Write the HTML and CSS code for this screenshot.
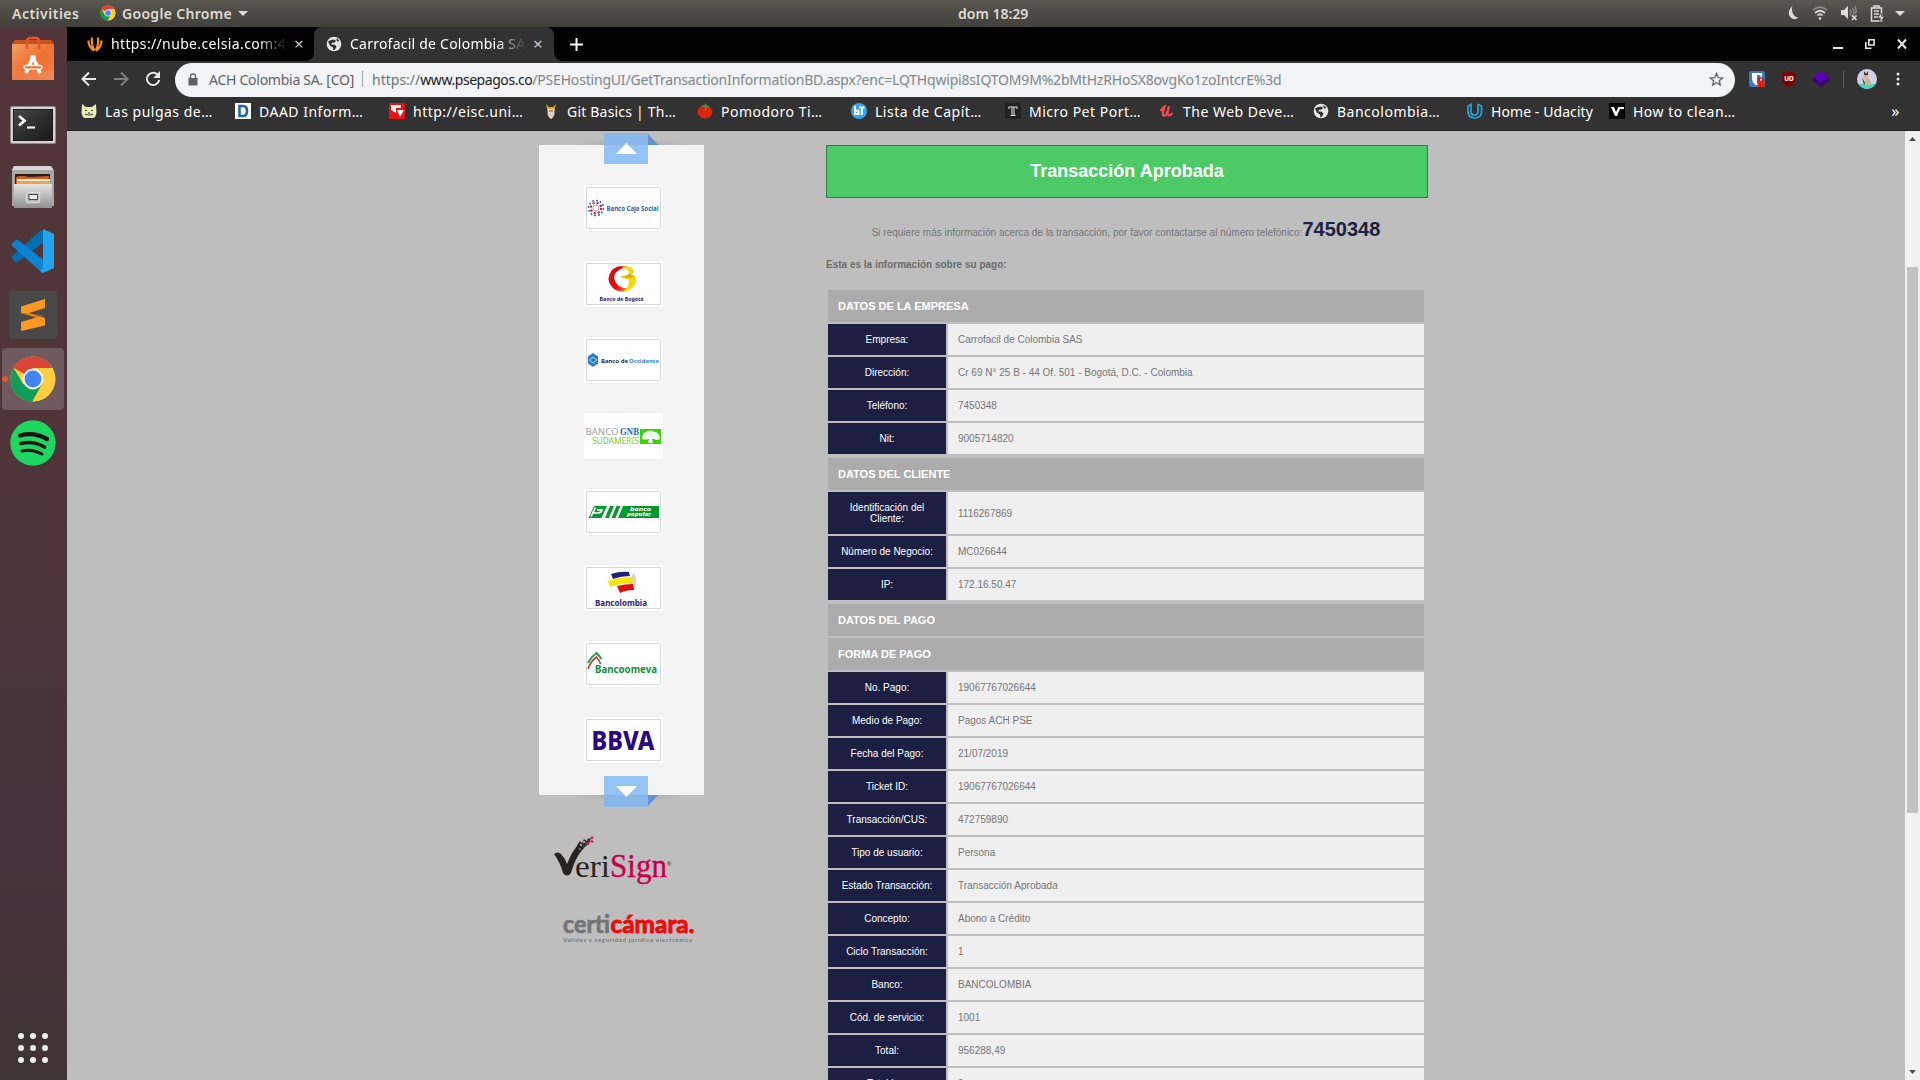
FILE: index.html
```html
<!DOCTYPE html>
<html lang="es">
<head>
<meta charset="utf-8">
<title>Carrofacil de Colombia SAS</title>
<link rel="stylesheet" href="styles.css">
</head>
<body>
<svg class="defs" width="0" height="0">
  <defs>
    <linearGradient id="bag" x1="0" y1="0" x2="1" y2="1"><stop offset="0" stop-color="#f0a060"/><stop offset=".5" stop-color="#ef7134"/><stop offset="1" stop-color="#f08048"/></linearGradient>
    <linearGradient id="steel" x1="0" y1="0" x2="0" y2="1"><stop offset="0" stop-color="#e4e4e4"/><stop offset="1" stop-color="#8f8f8f"/></linearGradient>
    <linearGradient id="screen" x1="0" y1="0" x2="1" y2="1"><stop offset="0" stop-color="#4a4a4a"/><stop offset=".55" stop-color="#2b2b2b"/><stop offset="1" stop-color="#1b1b1b"/></linearGradient>
    <linearGradient id="redc" x1="0" y1="0" x2="1" y2="1"><stop offset="0" stop-color="#c81018"/><stop offset=".6" stop-color="#f00808"/><stop offset="1" stop-color="#ffb090"/></linearGradient>
    <radialGradient id="cap" cx=".5" cy="1" r="1" gradientTransform="translate(.25 0) scale(.5 1)"><stop offset="0" stop-color="#909090"/><stop offset="1" stop-color="#bebebe" stop-opacity="0"/></radialGradient>
    <symbol id="chrome" viewBox="0 0 48 48">
      <circle cx="24" cy="24" r="22.5" fill="#ffcd40"/>
      <path d="M24 24L4.500 12.800A22.500 22.500 0 0 1 43.500 13H24z" fill="#db4437"/>
      <path d="M4.500 12.800A22.500 22.500 0 0 0 23.500 46.500L33 29.500 24 24 14.500 29.500z" fill="#0f9d58"/>
      <path d="M24 13.500h19.500a22.500 22.500 0 0 1-20 33L33.200 29.200z" fill="#ffcd40"/>
      <circle cx="24" cy="24" r="10.400" fill="#f4f4f4"/><circle cx="24" cy="24" r="8.400" fill="#4285f4"/>
    </symbol>
    <symbol id="globe" viewBox="0 0 16 16">
      <circle cx="8" cy="8" r="7.300" fill="#e6e6e6"/>
      <path d="M2 5.500L5 4l3-.5 2 1.300-1.200 1.700-2.500.3L5 8.200l3.800.6 1.700 2L9 13.600 7.300 14.500 7 11.500 4 9.700z" fill="#333"/><path d="M10.500 2l2.500 2.300-.8 1.700-1.500-1.200z" fill="#333"/>
    </symbol>
  </defs>
</svg>

<header class="topbar">
  <span class="activities">Activities</span>
  <span class="appmenu"><svg width="16" height="16"><use href="#chrome"/></svg><span>Google Chrome</span><i class="caret"></i></span>
  <span class="clock">dom 18:29</span>
  <span class="status">
    <svg width="12" height="18" viewBox="0 0 14 18"><path d="M5 1C1.500 4-.5 9 2.500 13.500 5 17 10 17 12 14 7 14 3.500 8 5 1z" fill="#dfdbd2"/></svg>
    <svg width="16" height="16" viewBox="0 0 16 16" fill="none" stroke="#dfdbd2" stroke-width="1.700"><path d="M1 5.200Q8-1 15 5.200" stroke="#8d8a83"/><path d="M3 8Q8 3.500 13 8M5.300 10.500Q8 8 10.700 10.500"/><circle cx="8" cy="13.500" r="1.300" fill="#dfdbd2" stroke="none"/></svg>
    <svg width="18" height="16" viewBox="0 0 18 16"><path d="M1 5h3l4-4v13l-4-4H1z" fill="#dfdbd2"/><path d="M10 4.500q2 3 0 6M12.500 2.500q3 5 0 9M15 1q2 5 .5 8" fill="none" stroke="#8d8a83" stroke-width="1.400"/><path d="M12 10.500l4.500 4.500m0-4.500L12 15" stroke="#dfdbd2" stroke-width="1.600"/></svg>
    <svg width="15" height="17" viewBox="0 0 15 17"><path d="M4 3V1h5v2M1.500 3h10v13h-10zM4 6h5M4 9h5M4 12h4" fill="none" stroke="#dfdbd2" stroke-width="1.500"/><path d="M11.500 8l-4 5h3l-1 4 5-5.500h-3z" fill="#dfdbd2" stroke="#4c4a45" stroke-width=".6"/></svg>
    <i class="caret"></i>
  </span>
</header>

<div class="desktop">
  <nav class="dock">
    <div class="dock-item"><svg width="44" height="46" viewBox="0 0 44 46"><path d="M1 8l3-4h36l3 4z" fill="#c9501f"/><path d="M1 8h42v36H1z" fill="url(#bag)"/><path d="M1 35h42v9H1z" fill="#fff" opacity=".07"/><path d="M16 13V6q0-4 3-4h6q3 0 3 4v7" fill="none" stroke="#e2582a" stroke-width="2.600"/><path d="M22 21l-7 16M22 21l7 16M19.500 21h5" fill="none" stroke="#fff" stroke-width="3.600"/><rect x="13" y="29.500" width="18" height="3.600" rx="1.800" fill="#ef7134" stroke="#fff" stroke-width="1.300"/></svg></div>
    <div class="dock-item terminal"><svg width="46" height="38" viewBox="0 0 46 38"><rect x=".5" y=".5" width="45" height="37" rx="1.500" fill="#d2d2d2" stroke="#8f8f8f"/><rect x="3.500" y="3.500" width="39" height="31" fill="url(#screen)" stroke="#1d1d1d"/><path d="M9 10l5.500 4.700L9 19.500" fill="none" stroke="#f0f0f0" stroke-width="2.800"/><path d="M17 21.500h8" stroke="#f0f0f0" stroke-width="2.200"/></svg></div>
    <div class="dock-item"><svg width="44" height="44" viewBox="0 0 44 44"><path d="M3 1h37l3 4v36H1V5z" fill="#a8a8a8"/><path d="M3 1h37l2 4H1z" fill="#d6d6d6"/><path d="M4 9h35v12H4z" fill="#2a2220"/><path d="M5 12q6-2 13 0l20-1v8H5z" fill="#dd5a1c"/><path d="M6 14h33v2H6z" fill="#fff3dc"/><path d="M6 16h33v3H6z" fill="#eda352"/><path d="M3 19h38v24H3z" fill="url(#steel)"/><rect x="15.500" y="27.500" width="13" height="10" rx="1.500" fill="#b8b8b8" stroke="#d8d8d8" stroke-width="1.500"/><rect x="18" y="29.500" width="8.500" height="5" fill="#e8e8e8" stroke="#4a4a4a"/></svg></div>
    <div class="dock-item"><svg width="44" height="44" viewBox="0 0 44 44"><path d="M32 1v12.500L7 33q-1 .8-2 0l-4-3.500q-1-1.200 0-2.200L29 2z" fill="#0070b3"/><path d="M32 43V30.500L7 11q-1-.8-2 0l-4 3.500q-1 1.200 0 2.200L29 42z" fill="#0c84cf"/><path d="M32 0l11 5v34l-11 5-3-2 3-3z" fill="#24a3ef"/></svg></div>
    <div class="dock-item"><svg width="48" height="48" viewBox="0 0 48 48"><rect width="48" height="48" rx="3" fill="#484848"/><path d="M12 15.500L36 8v9l-16 5 16 5v7.500L12 40v-9l15-4.500-15-4.500z" fill="#ff9822"/><path d="M12 22l15 4.500 9-2L20 22z" fill="#c9690f" opacity=".55"/></svg></div>
    <div class="dock-item active"><svg width="48" height="48"><use href="#chrome"/></svg></div>
    <div class="dock-item"><svg width="46" height="46" viewBox="0 0 46 46"><circle cx="23" cy="23" r="22.700" fill="#1ed760"/><g fill="none" stroke="#191414" stroke-linecap="round"><path d="M10 15.500q14-4 27 3.500" stroke-width="4.400"/><path d="M11 23.500q12-3 23.500 3.500" stroke-width="3.600"/><path d="M12 31q10-2.500 20 3" stroke-width="3"/></g></svg></div>
    <div class="dock-apps"><i></i><i></i><i></i><i></i><i></i><i></i><i></i><i></i><i></i></div>
  </nav>

  <main class="browser">
    <div class="tabs">
      <div class="tab">
        <svg width="16" height="16" viewBox="0 0 16 16" fill="none" stroke="#f58a1f" stroke-width="2.200"><path d="M7 15Q1 10 1.500 4.500M7.300 14.500Q4 8 5 1.500M9 15q6-5 5.500-10.500M8.700 14.500Q12 8 11 1.500"/></svg>
        <span class="tab-title t1">https://nube.celsia.com:4</span><span class="x">×</span>
      </div>
      <div class="tab current">
        <svg width="16" height="16"><use href="#globe"/></svg>
        <span class="tab-title t2">Carrofacil de Colombia SA</span><span class="x">×</span>
      </div>
      <svg class="plus" width="13" height="13" viewBox="0 0 13 13"><path d="M6.500 0v13M0 6.500h13" stroke="#fff" stroke-width="2"/></svg>
      <div class="win">
        <svg width="10" height="12" viewBox="0 0 10 12"><path d="M0 10h10" stroke="#e8e8e8" stroke-width="2"/></svg>
        <svg width="10" height="12" viewBox="0 0 10 12"><path d="M3.800 1.800h5.300V7H3.800zM.8 4v6.200h5.700" fill="none" stroke="#e8e8e8" stroke-width="1.600"/></svg>
        <svg width="10" height="12" viewBox="0 0 10 12"><path d="M1 1.500l8 9M9 1.500l-8 9" stroke="#e8e8e8" stroke-width="2"/></svg>
      </div>
    </div>

    <div class="toolbar">
      <svg width="16" height="16" viewBox="0 0 16 16" fill="none" stroke="#e8e8e8" stroke-width="2"><path d="M15 8H2M8 1.500L1.500 8 8 14.500"/></svg>
      <svg width="16" height="16" viewBox="0 0 16 16" fill="none" stroke="#7e7e7e" stroke-width="2"><path d="M1 8h13M8 1.500L14.500 8 8 14.500"/></svg>
      <svg width="16" height="16" viewBox="0 0 16 16"><path d="M13.200 4.300A6.200 6.200 0 1 0 14.200 9" fill="none" stroke="#e8e8e8" stroke-width="2"/><path d="M15 0v7H8.300z" fill="#e8e8e8"/></svg>
      <div class="omnibox">
        <svg width="10" height="13" viewBox="0 0 10 13"><path d="M.5 5h9v7.500h-9z" fill="#5f6368"/><path d="M2.500 5V3q0-2 2.500-2t2.500 2v2" fill="none" stroke="#5f6368" stroke-width="1.400"/></svg>
        <span class="org">ACH Colombia SA. [CO]</span><i class="bar"></i>
        <span class="url"><span class="scheme">https://</span><span class="host">www.psepagos.co</span><span class="path">/PSEHostingUI/GetTransactionInformationBD.aspx?enc=LQTHqwipi8sIQTOM9M%2bMtHzRHoSX8ovgKo1zoIntcrE%3d</span></span>
        <svg class="star" width="15" height="15" viewBox="0 0 16 16"><path d="M8 1.500l1.900 4.400 4.700.4-3.600 3.100 1.100 4.600L8 11.500 3.900 14 5 9.400 1.400 6.300l4.700-.4z" fill="none" stroke="#5f6368" stroke-width="1.400"/></svg>
      </div>
      <div class="exts">
        <svg width="16" height="16" viewBox="0 0 16 16"><rect width="16" height="16" rx="2" fill="#3c78c3"/><path d="M3 2h10v6q0 4-5 6.500Q3 12 3 8z" fill="#fff"/><path d="M8 4h3.500v4q0 2-3.500 4.500z" fill="#3c78c3"/><path d="M9.800 10V8.800q0-2 2.200-2t2.200 2V10" fill="none" stroke="#c11" stroke-width="1.300"/><path d="M8.500 9.500H15.500V16h-7z" fill="#e0200f"/></svg>
        <svg width="16" height="16" viewBox="0 0 16 16"><path d="M8 0q3 2 7 2v6q0 5-7 8-7-3-7-8V2q4 0 7-2z" fill="#800000"/><text x="8" y="10" text-anchor="middle" font-family="Noto Sans, sans-serif" font-size="6.500" font-weight="700" fill="#fff">UD</text></svg>
        <svg width="16" height="16" viewBox="0 0 16 16"><path d="M8 0l8 6-8 6-8-6z" fill="#5b00b5"/><path d="M0 6l8 6 8-6v4l-8 6-8-6z" fill="#36086e"/></svg>
        <i class="vsep"></i>
        <svg width="20" height="20" viewBox="0 0 20 20"><circle cx="10" cy="10" r="10" fill="#cfcfe8"/><path d="M1.500 15h17A10 10 0 0 1 1.500 15z" fill="#3fd6c6"/><path d="M7 3l2 2 2-2 .5 4-1 2q3 1.500 3.500 7H8.500L8 10 6.500 7z" fill="#c9b791"/><path d="M7 2l2 3 2-3v4H7zM5 8l3 6-1 2z" fill="#3b3130"/></svg>
        <svg class="menu" width="4" height="16" viewBox="0 0 4 16" fill="#e8e8e8"><circle cx="2" cy="3" r="1.500"/><circle cx="2" cy="8" r="1.500"/><circle cx="2" cy="13" r="1.500"/></svg>
      </div>
    </div>

    <div class="bookmarks">
      <span class="bm"><svg width="16" height="16" viewBox="0 0 16 16"><path d="M1 1l4 3h6l4-3 .5 9q-1 5-3.500 5H4q-2.500 0-3.500-5z" fill="#e9eeb0"/><path d="M4 7.500h2M10 7.500h2M4 11q4 2 8 0M8 9v2" stroke="#444" stroke-width="1.200" fill="none"/></svg>Las pulgas de…</span>
      <span class="bm"><svg width="16" height="16" viewBox="0 0 16 16"><path d="M0 0h16v16H0z" fill="#fff"/><path d="M4.500 3H8q4 0 4 5t-4 5H4.500z" fill="none" stroke="#1f67a8" stroke-width="2.600"/></svg>DAAD Inform…</span>
      <span class="bm"><svg width="16" height="16" viewBox="0 0 16 16"><path d="M0 0h16v16H0z" fill="#e11"/><path d="M2 2h10v3H7v5L2 7z" fill="#fff"/><path d="M8 7h7l-4 7z" fill="#fff"/></svg>http://eisc.uni…</span>
      <span class="bm tight"><svg width="16" height="16" viewBox="0 0 16 16"><path d="M3 1l3 3h4l3-3-1.500 6h-7z" fill="#e0a52a"/><path d="M4.500 6h7v5q-1 4-3.500 5-2.500-1-3.500-5z" fill="#d8d2c8"/><path d="M6 7h4v2H6z" fill="#c98f6a"/></svg>Git Basics | Th…</span>
      <span class="bm"><svg width="16" height="16" viewBox="0 0 16 16"><ellipse cx="8" cy="9" rx="7.500" ry="6.500" fill="#e02412"/><path d="M8 5L4 2l3 .5L9 0l.5 2.500L13 3 9.500 5 8 8z" fill="#4b9b2c"/></svg>Pomodoro Ti…</span>
      <span class="bm"><svg width="16" height="16" viewBox="0 0 16 16"><circle cx="8" cy="8" r="8" fill="#35a7ea"/><path d="M4 3v9M4 8.500q3-2 3.500 0V11H4M8 4.500h5.500M10.800 4.500V12" stroke="#fff" stroke-width="2" fill="none"/></svg>Lista de Capít…</span>
      <span class="bm"><svg width="16" height="16" viewBox="0 0 16 16"><path d="M0 0h16v16H0z" fill="#222"/><path d="M4 6V4h8v2M7 4v8M9 4v8M5.500 12.500h5" stroke="#d8d8d8" stroke-width="1.100" fill="none"/></svg>Micro Pet Port…</span>
      <span class="bm"><svg width="16" height="16" viewBox="0 0 16 16"><path d="M1.500 8q3-4 4-4.500Q3.500 9 4 12q1 2 3.500-1L10 3.500Q8 9 9 12q1.500 1.500 4.500-2" fill="none" stroke="#ec4b51" stroke-width="2.200"/></svg>The Web Deve…</span>
      <span class="bm"><svg width="16" height="16"><use href="#globe"/></svg>Bancolombia…</span>
      <span class="bm udacity"><svg width="16" height="16" viewBox="0 0 16 16"><path d="M1 3l3-1.500V9q0 3 3 3.500M4 1.500V8q0 4 3.500 4T11 8V1.500L14.500 3v6q0 5-6 6Q1 15 1 9V3" fill="none" stroke="#1fa6e6" stroke-width="1.700"/></svg>Home - Udacity</span>
      <span class="bm"><svg width="16" height="16" viewBox="0 0 16 16"><path d="M0 0h16v16H0z" fill="#000"/><path d="M2 4h3l2 5 2.500-5H15v2h-4l-3 7H6z" fill="#fff"/></svg>How to clean…</span>
      <span class="more">»</span>
    </div>

    <div class="view">
      <div class="page">
        <aside class="side">
          <div class="carousel">
            <svg class="cap top" width="124" height="8"><path d="M0 0h124v8H0z" fill="url(#cap)"/></svg>
            <svg class="arrow up" width="54" height="31" viewBox="0 0 54 31"><path d="M44 1l10 11H44z" fill="#5e93cf"/><path d="M0 0h44v31H0z" fill="#93c3f4"/><path d="M0 0h44v12H0z" fill="#89b8e8"/><path d="M12 21l10.500-11L33 21z" fill="#fff"/></svg>
            <svg class="cap bottom" width="124" height="8"><path d="M0 0h124v8H0z" fill="url(#cap)"/></svg>
            <svg class="arrow down" width="54" height="31" viewBox="0 0 54 31"><path d="M44 30l10-11H44z" fill="#5e93cf"/><path d="M0 0h44v31H0z" fill="#93c3f4"/><path d="M0 19h44v12H0z" fill="#89b8e8"/><path d="M12 10l10.500 11L33 10z" fill="#fff"/></svg>

            <svg class="bank" viewBox="0 0 79 46"><g fill="none" stroke-width="2.200"><circle cx="12" cy="23" r="7.500" stroke="#2a6cb4" stroke-width="1.500" stroke-dasharray="1.900 2"/><circle cx="12" cy="23" r="5.200" stroke="#d02038" stroke-dasharray="2.100 1.980"/><circle cx="12" cy="23" r="3" stroke="#b8a0c8" stroke-width="1"/></g><text x="22.500" y="25.700" font-size="6.200" font-weight="700" fill="#1f5fae" textLength="52" lengthAdjust="spacingAndGlyphs">Banco Caja Social</text></svg>
            <svg class="bank" viewBox="0 0 79 46"><path d="M47 7Q36 2 28 9q-7 9 0 17 6 6 14 4l3-3q-9 1-13-5-5-8 3-13 5-3 12-2z" fill="url(#redc)"/><path d="M37 6q7-2 12 2 2 4-2 6l4 1q3 6-2 11-4 5-10 4 7-4 6-11l-9-3 9-2q2-5-8-8z" fill="#f7d808"/><path d="M34 15q7 1 11-2l6 2-6 2z" fill="#dba808"/><text x="15.500" y="40" font-size="5.800" font-weight="700" fill="#221a78" textLength="44" lengthAdjust="spacingAndGlyphs">Banco de Bogotá</text></svg>
            <svg class="bank" viewBox="0 0 79 46"><path d="M9 16l5 3.500v7L9 30l-5-3.500v-7z" fill="#2f7ccb"/><path d="M9 20l3.500 3L9 26l-3.500-3z" fill="none" stroke="#b8dcf4" stroke-width="1"/><text x="17" y="25.500" font-size="6" font-weight="700" fill="#1c2c68" textLength="27" lengthAdjust="spacingAndGlyphs">Banco de</text><text x="45" y="25.500" font-size="6" font-weight="700" fill="#2b86d4" textLength="30" lengthAdjust="spacingAndGlyphs">Occidente</text></svg>
            <svg class="bank plain" viewBox="0 0 79 46"><text x="1.500" y="22" font-size="8.800" fill="#a0a0a0" textLength="33" lengthAdjust="spacingAndGlyphs">BANCO</text><text class="serif" x="36" y="22" font-size="9.500" font-weight="700" fill="#2264a8" textLength="19" lengthAdjust="spacingAndGlyphs">GNB</text><text x="8" y="30.700" font-size="8.800" fill="#6cd42c" textLength="47" lengthAdjust="spacingAndGlyphs">SUDAMERIS</text><path d="M56 16h21v15H56z" fill="#38d400"/><path d="M58 26q0-6 4-7 4-3 9 0 5 1 5 7-3 2-6 0h-2l1 4h-5l1-4q-4 1-7 0z" fill="#f2fff0"/></svg>
            <svg class="bank" viewBox="0 0 79 46"><path d="M10 17h13l-5.500 12H4.500z" fill="#089830"/><path d="M11.500 18.500l-4.500 9M8 24h6q3 0 4-3h-5" fill="none" stroke="#fff" stroke-width="1.700"/><path d="M26 17h4l-5 12h-4zM32.500 17h4l-5 12h-4zM39 17h36v12H34z" fill="#089830"/><text x="46" y="21.800" font-size="5" font-style="italic" font-weight="700" fill="#fff" textLength="21" lengthAdjust="spacingAndGlyphs">banco</text><text x="43" y="27.300" font-size="5" font-style="italic" font-weight="700" fill="#fff" textLength="24" lengthAdjust="spacingAndGlyphs">popular</text></svg>
            <svg class="bank" viewBox="0 0 79 46"><path d="M49 8q6 5 1 16l-5-2z" fill="#d5d5d5"/><path d="M27 9q9-3 18-2l1 4q-9 0-17 3z" fill="#24207c"/><path d="M24 16q12-4 25-4l-1 6q-12 0-22 4z" fill="#f8e400"/><path d="M33 21q8-2 16-2l1 6q-8 0-14 3z" fill="#e01010"/><text x="11" y="40.500" font-size="9.500" font-weight="700" fill="#2a2084" textLength="52" lengthAdjust="spacingAndGlyphs">Bancolombia</text></svg>
            <svg class="bank" viewBox="0 0 79 46"><path d="M4 22q3-6 8.500-10 3 3 5 6" fill="none" stroke="#1a9850" stroke-width="1.800"/><path d="M4 28q3-8 8.500-12 3 3 4 7" fill="none" stroke="#c43a2c" stroke-width="1.600"/><text x="11" y="31.700" font-size="10.500" font-weight="700" fill="#109040" textLength="62" lengthAdjust="spacingAndGlyphs">Bancoomeva</text></svg>
            <svg class="bank" viewBox="0 0 79 46"><text x="7.500" y="33.300" font-size="26" font-weight="800" fill="#2a0a80" textLength="63" lengthAdjust="spacingAndGlyphs">BBVA</text></svg>
          </div>
          <svg class="verisign" width="120" height="52" viewBox="0 0 120 52"><path d="M0 18q4-3 7 0 4 4 6 10Q19 13 25 8l4 5q-8 9-12 24-4 5-8 0Q6 26 0 18z" fill="#262524"/><path d="M23 9l3-4 2 2 2-4 3 2 1-3 3 1-2 5-4 3-3 3z" fill="#262524" opacity=".9"/><g fill="#bebebe"><circle cx="27" cy="9" r="1"/><circle cx="30" cy="6" r="1"/><circle cx="33" cy="7" r="1"/><circle cx="26" cy="13" r=".8"/></g><g fill="#c8104c"><circle cx="38" cy="1.800" r="1.400"/><circle cx="38" cy="5.500" r="1.300"/><circle cx="33.500" cy="7.500" r="1.400"/></g><text class="serif" x="21" y="41" font-size="32" fill="#262524" textLength="35" lengthAdjust="spacingAndGlyphs">eri</text><text class="serif" x="56" y="41" font-size="34" fill="#c4004c" stroke="#c4004c" stroke-width=".4" textLength="57" lengthAdjust="spacingAndGlyphs">Sign</text><text x="112.500" y="30" font-size="6" fill="#444">®</text></svg>
          <svg class="certi" width="135" height="32" viewBox="0 0 135 32"><text class="lato" x="0" y="20.500" font-size="25" font-weight="700" fill="#747476" stroke="#747476" stroke-width=".7" textLength="47" lengthAdjust="spacingAndGlyphs">certi</text><text class="lato" x="47.500" y="20.500" font-size="25" font-weight="700" fill="#ee0a0a" stroke="#ee0a0a" stroke-width=".9" textLength="84" lengthAdjust="spacingAndGlyphs">cámara.</text><text class="lato" x="0" y="29.500" font-size="6" font-weight="700" fill="#77777a" textLength="129">Validez y seguridad jurídica electrónica</text></svg>
        </aside>

        <section class="detail">
          <h1 class="result">Transacción Aprobada</h1>
          <p class="contact">Si requiere más información acerca de la transacción, por favor contactarse al número telefónico:<b>7450348</b></p>
          <p class="intro">Esta es la información sobre su pago:</p>
          <table>
            <colgroup><col class="label"><col></colgroup>
            <tr><th colspan="2">DATOS DE LA EMPRESA</th></tr>
            <tr><td class="k">Empresa:</td><td>Carrofacil de Colombia SAS</td></tr>
            <tr><td class="k">Dirección:</td><td>Cr 69 N° 25 B - 44 Of. 501 - Bogotá, D.C. - Colombia</td></tr>
            <tr><td class="k">Teléfono:</td><td>7450348</td></tr>
            <tr><td class="k">Nit:</td><td>9005714820</td></tr>
          </table>
          <table>
            <colgroup><col class="label"><col></colgroup>
            <tr><th colspan="2">DATOS DEL CLIENTE</th></tr>
            <tr><td class="k">Identificación del Cliente:</td><td>1116267869</td></tr>
            <tr><td class="k">Número de Negocio:</td><td>MC026644</td></tr>
            <tr><td class="k">IP:</td><td>172.16.50.47</td></tr>
          </table>
          <table>
            <colgroup><col class="label"><col></colgroup>
            <tr><th colspan="2">DATOS DEL PAGO</th></tr>
            <tr><th colspan="2">FORMA DE PAGO</th></tr>
            <tr><td class="k">No. Pago:</td><td>19067767026644</td></tr>
            <tr><td class="k">Medio de Pago:</td><td>Pagos ACH PSE</td></tr>
            <tr><td class="k">Fecha del Pago:</td><td>21/07/2019</td></tr>
            <tr><td class="k">Ticket ID:</td><td>19067767026644</td></tr>
            <tr><td class="k">Transacción/CUS:</td><td>472759890</td></tr>
            <tr><td class="k">Tipo de usuario:</td><td>Persona</td></tr>
            <tr><td class="k">Estado Transacción:</td><td>Transacción Aprobada</td></tr>
            <tr><td class="k">Concepto:</td><td>Abono a Crédito</td></tr>
            <tr><td class="k">Ciclo Transacción:</td><td>1</td></tr>
            <tr><td class="k">Banco:</td><td>BANCOLOMBIA</td></tr>
            <tr><td class="k">Cód. de servicio:</td><td>1001</td></tr>
            <tr><td class="k">Total:</td><td>956288,49</td></tr>
            <tr><td class="k">Total Iva:</td><td>0</td></tr>
          </table>
        </section>
      </div>
      <div class="scrollbar">
        <svg width="7" height="4"><path d="M0 4L3.500 0 7 4z" fill="#4d4d4d"/></svg>
        <i class="thumb"></i>
        <svg width="7" height="4"><path d="M0 0l3.500 4L7 0z" fill="#4d4d4d"/></svg>
      </div>
    </div>
  </main>
</div>
</body>
</html>
```
FILE: styles.css
```css
* { box-sizing: border-box; }
body { margin: 0; width: 1920px; height: 1080px; overflow: hidden; display: flex; flex-direction: column; font-family: "Noto Sans", sans-serif; background: #bebebe; }
svg { flex: none; display: block; overflow: visible; }
.defs { position: absolute; }

.topbar { height: 27px; flex: none; display: grid; grid-template-columns: 100px 1fr auto 1fr; align-items: center; background: linear-gradient(#5a574e, #403f3a); color: #dfdbd2; font-size: 14px; font-weight: 600; padding: 0 15px 1px 0; }
.activities { padding-left: 12px; letter-spacing: .5px; }
.appmenu { display: flex; align-items: center; gap: 6px; letter-spacing: .31px; }
.appmenu .caret { margin-left: 0; }
.clock { width: 71px; white-space: nowrap; margin-left: -18px; }
.caret { border: 5px solid transparent; border-top-color: #dfdbd2; border-bottom: 0; }
.status { display: flex; align-items: center; justify-content: flex-end; gap: 12px; }
.status .caret { margin-left: -2px; }

.desktop { flex: 1; display: flex; min-height: 0; }
.dock { width: 67px; flex: none; display: flex; flex-direction: column; background: linear-gradient(#523539, #4f353a 40%, #45323a 80%, #3e3334); }
.dock-item { height: 62px; width: 62px; margin: 1px 2px; display: flex; align-items: center; justify-content: center; border-radius: 4px; }
.dock-item.terminal { padding-top: 3px; }
.dock-item.active { background: #6f5a60; position: relative; }
.dock-item.active::before { content: ""; position: absolute; left: 0; top: 28px; width: 6px; height: 6px; border-radius: 50%; background: #e95420; }
.dock-apps { margin: auto 0 17px 18px; display: grid; grid-template-columns: repeat(3, 6px); gap: 6px; }
.dock-apps i { width: 6px; height: 6px; border-radius: 50%; background: #eee; }

.browser { flex: 1; min-width: 0; display: flex; flex-direction: column; }
.tabs { height: 34px; flex: none; background: #000; display: flex; align-items: center; padding-left: 7px; color: #fff; font-size: 14px; }
.tab { height: 34px; width: 240px; display: flex; align-items: center; padding: 0 0 1px 13px; }
.tab.current { background: #323232; border-radius: 8px 8px 0 0; position: relative; padding-left: 12px; }
.tab.current::before, .tab.current::after { content: ""; position: absolute; bottom: 0; width: 8px; height: 8px; }
.tab.current::before { left: -8px; background: radial-gradient(circle at 0 0, #000 7.5px, #323232 8px); }
.tab.current::after { right: -8px; background: radial-gradient(circle at 100% 0, #000 7.5px, #323232 8px); }
.tab-title { width: 176px; margin-left: 8px; overflow: hidden; white-space: nowrap; -webkit-mask-image: linear-gradient(90deg, #000 83%, transparent); mask-image: linear-gradient(90deg, #000 83%, transparent); }
.t1 { letter-spacing: .36px; }
.t2 { letter-spacing: .23px; }
.x { margin-left: 7px; color: #c8c8c8; font-size: 17px; }
.plus { margin-left: 16px; }
.win { display: flex; gap: 22px; margin-left: auto; padding-right: 13px; }

.toolbar { height: 37px; flex: none; background: #323232; display: flex; align-items: center; gap: 16px; padding: 0 0 1px 14px; }
.omnibox { width: 1560px; height: 34px; margin-left: -2px; background: #f1f3f4; border-radius: 17px; display: flex; align-items: center; font-size: 14px; padding: 0 11px 1px 13px; margin-top: 1px; white-space: nowrap; }
.org { margin-left: 11px; color: #5f6368; letter-spacing: -.26px; }
.bar { width: 1px; height: 16px; background: #a5a8ab; margin: 0 9px 0 8px; }
.scheme { color: #6f7479; }
.host { color: #202124; letter-spacing: -.44px; }
.path { color: #80868b; letter-spacing: -.19px; }
.star { margin-left: auto; }
.exts { display: flex; align-items: center; gap: 16px; margin-left: -2px; }
.vsep { width: 1px; height: 17px; background: #5f5f5f; margin: 0 -3px 0 -2px; }
.menu { margin-left: 3px; }

.bookmarks { height: 33px; flex: none; background: #323232; border-bottom: 1px solid #231f22; display: flex; align-items: center; padding: 0 20px 6px 14px; color: #fff; font-size: 14px; letter-spacing: .5px; }
.bm { width: 154px; display: flex; align-items: center; gap: 8px; white-space: nowrap; }
.bm.tight { letter-spacing: .2px; }
.bm.udacity { width: 142px; letter-spacing: .08px; }
.more { margin-left: auto; font-size: 16px; }

.view { flex: 1; min-height: 0; display: flex; background: #bebebe; overflow: hidden; }
.page { flex: 1; display: flex; gap: 122px; padding: 14px 0 0 472px; overflow: hidden; }
.side { width: 165px; }
.carousel { height: 650px; background: #f3f3f3; padding: 40px 0 0 4px; display: flex; flex-direction: column; align-items: center; gap: 30px; position: relative; }
.arrow { position: absolute; left: 65px; }
.arrow.up { top: -12px; }
.arrow.down { bottom: -12px; }
.cap { position: absolute; left: 29px; }
.cap.top { top: -8px; }
.cap.bottom { bottom: -8px; transform: scaleY(-1); }
.bank { width: 79px; height: 46px; background: #fff; outline: 1px solid #d8d8d8; outline-offset: -3px; font-family: "Noto Sans", sans-serif; }
.bank.plain { outline: none; }
.serif { font-family: "Liberation Serif", serif; }
.lato { font-family: Lato, sans-serif; }
.verisign { margin: 41px 0 0 15px; }
.certi { margin: 24px 0 0 24px; }

.detail { width: 602px; font-family: "Liberation Sans", Arial, sans-serif; font-size: 10px; color: #757575; }
.result { margin: 0; height: 53px; border: 1px solid #2f7d45; background: #4bca66; color: #fff; font-size: 18px; line-height: 51px; text-align: center; }
.contact { margin: 20px 2px 0 0; line-height: 23px; text-align: center; white-space: nowrap; }
.contact b { font-size: 20px; color: #1c1f42; }
.intro { margin: 15px 0 0; line-height: 11px; font-weight: 700; color: #6c6c6c; }
.intro + table { margin-top: 18px; }
table { width: 600px; border-spacing: 2px; table-layout: fixed; }
.label { width: 118px; }
th { background: #ababab; color: #fff; font-size: 11px; line-height: 12px; padding: 10px; text-align: left; }
td { background: #efefef; padding: 10px; line-height: 11px; color: #757575; }
td.k { background: #1c1f42; color: #fff; text-align: center; }

.scrollbar { width: 15px; background: #f1f1f1; display: flex; flex-direction: column; align-items: center; padding: 6px 0; }
.thumb { width: 11px; height: 546px; background: #c1c1c1; margin: 126px 0 auto; }
```
